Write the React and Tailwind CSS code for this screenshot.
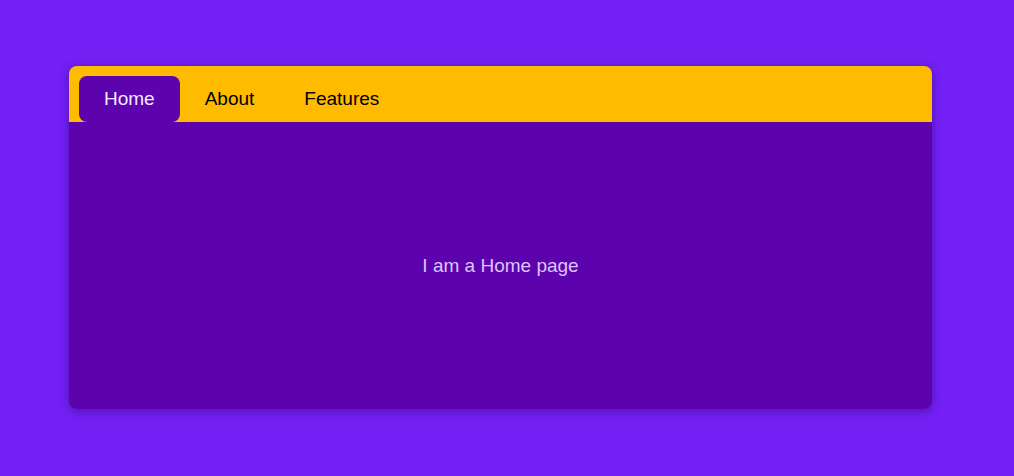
import { useState } from 'react';

const tabs = ['Home', 'About', 'Features'];

export default function App() {
  const [active, setActive] = useState('Home');

  return (
    <div className="min-h-screen w-full bg-[#7220f4] pt-[66px] pl-[69px] font-['Liberation_Sans',Arial,sans-serif]">
      <div className="w-[863px] h-[343px] rounded-lg overflow-hidden shadow-[0_2px_10px_rgba(40,0,90,0.45)] flex flex-col">
        <div className="h-[56px] bg-[#ffbb00] flex items-end pl-[10px]">
          {tabs.map((t) => (
            <button
              key={t}
              onClick={() => setActive(t)}
              className={
                t === active
                  ? 'h-[46px] px-[25px] rounded-lg bg-[#5c03ad] text-[19px] text-[#f3eaff]'
                  : 'h-[46px] px-[25px] text-[19px] text-black'
              }
            >
              {t}
            </button>
          ))}
        </div>
        <div className="flex-1 bg-[#5c03ad] flex items-center justify-center pt-[2px]">
          <p className="text-[19px] text-[#dcc4ff]">I am a {active} page</p>
        </div>
      </div>
    </div>
  );
}
